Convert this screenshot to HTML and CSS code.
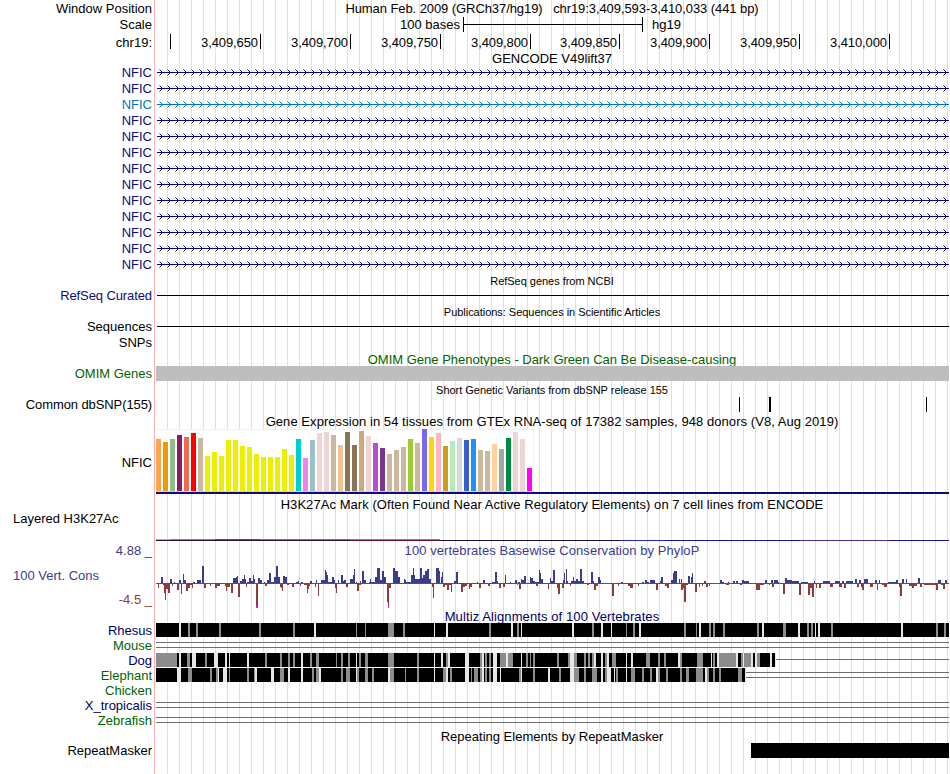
FILE: index.html
```html
<!DOCTYPE html>
<html lang="en">

<head>
    <meta charset="utf-8">
    <title>Genome Browser - hg19</title>
    <link rel="stylesheet" href="styles.css">
</head>

<body>
    <main class="browser">
        <div class="row row-head">
            <span class="label">Window Position</span>
            <div class="track title position">Human Feb. 2009 (GRCh37/hg19) &nbsp; chr19:3,409,593-3,410,033 (441 bp)</div>
        </div>
        <div class="row row-head row-up">
            <span class="label">Scale</span>
            <div class="track scale"><span class="scale-name">100 bases</span><span class="scale-bar"></span><span>hg19</span></div>
        </div>
        <div class="row row-head">
            <span class="label">chr19:</span>
            <div class="track ruler">
                <span class="pos pos-first"></span>
                <span class="pos">3,409,650</span>
                <span class="pos">3,409,700</span>
                <span class="pos">3,409,750</span>
                <span class="pos">3,409,800</span>
                <span class="pos pos-short">3,409,850</span>
                <span class="pos">3,409,900</span>
                <span class="pos">3,409,950</span>
                <span class="pos">3,410,000</span>
            </div>
        </div>

        <div class="row row-13"><div class="track title">GENCODE V49lift37</div></div>
        <div id="genes"></div>

        <div class="row row-refseq"><div class="track title small">RefSeq genes from NCBI</div></div>
        <div class="row row-up navy">
            <span class="label tight">RefSeq Curated</span>
            <div class="track"><div class="line"></div></div>
        </div>
        <div class="row row-15"><div class="track title small">Publications: Sequences in Scientific Articles</div></div>
        <div class="row row-up">
            <span class="label">Sequences</span>
            <div class="track"><div class="line"></div></div>
        </div>
        <div class="row row-up"><span class="label">SNPs</span></div>
        <div class="row row-15 green"><div class="track title">OMIM Gene Phenotypes - Dark Green Can Be Disease-causing</div></div>
        <div class="row row-up green">
            <span class="label">OMIM Genes</span>
            <div class="track"><div class="omim"></div></div>
        </div>
        <div class="row row-15"><div class="track title small">Short Genetic Variants from dbSNP release 155</div></div>
        <div class="row row-up">
            <span class="label tight">Common dbSNP(155)</span>
            <svg class="track" id="snps" viewBox="155 0 794 16"></svg>
        </div>

        <div class="row"><div class="track title loose">Gene Expression in 54 tissues from GTEx RNA-seq of 17382 samples, 948 donors (V8, Aug 2019)</div></div>
        <div class="row row-gtex">
            <span class="label">NFIC</span>
            <svg class="track" id="gtex" viewBox="155 429 794 67"></svg>
        </div>

        <div class="row"><div class="track title loose">H3K27Ac Mark (Often Found Near Active Regulatory Elements) on 7 cell lines from ENCODE</div></div>
        <div class="row row-h3k">
            <span class="label label-left">Layered H3K27Ac</span>
            <svg class="track" id="h3k" viewBox="155 512 794 31"></svg>
        </div>

        <div class="row row-cons blue">
            <div class="label cons-labels">
                <span>4.88 _</span>
                <span class="label-left">100 Vert. Cons</span>
                <span class="brown">-4.5 _</span>
            </div>
            <div class="track">
                <div class="title loose">100 vertebrates Basewise Conservation by PhyloP</div>
                <svg id="cons" viewBox="155 559 794 50"></svg>
            </div>
        </div>

        <div class="row row-14 dark"><div class="track title looser">Multiz Alignments of 100 Vertebrates</div></div>
        <div id="multiz"></div>

        <div class="row row-repeat"><div class="track title">Repeating Elements by RepeatMasker</div></div>
        <div class="row row-up">
            <span class="label">RepeatMasker</span>
            <div class="track"><div class="repeat"></div></div>
        </div>
    </main>
    <script src="tracks.js"></script>
</body>

</html>
```
FILE: styles.css
```css
:root {
    --navy: #0c0c78;
    --blue: #3c3c8c;
    --brown: #8c3c3c;
    --green: #006400;
}

body {
    margin: 0;
    background: #fff;
    color: #000;
    font-family: "Liberation Sans", Arial, sans-serif;
    font-size: 13px;
}

/* guide lines every 12px, pink border between labels and tracks */
.browser {
    width: 949px;
    height: 774px;
    overflow: hidden;
    background:
        linear-gradient(#ffb4b4, #ffb4b4) 154px 0 / 1px 100% no-repeat,
        repeating-linear-gradient(to right, #dcdcff 0 1px, transparent 1px 12px) 167px 0 / 782px 100% no-repeat;
}

.row {
    display: flex;
    height: 16px;
    line-height: 17px;
    white-space: nowrap;
}

.row-head { height: 17px; }
.row-up { line-height: 15px; }
.row-13 { height: 13px; line-height: 15px; }
.row-14 { height: 14px; line-height: 16px; }
.row-15 { height: 15px; line-height: 17px; }
.row-15 .label { line-height: 15px; }
.row-refseq { line-height: 19px; }
.row-gtex { height: 67px; line-height: 67px; }
.row-h3k { height: 31px; line-height: 14px; }
.row-cons { height: 66px; line-height: 16px; }
.row-repeat { height: 15px; line-height: 17px; }

.label {
    width: 152px;
    margin-right: 3px;
    text-align: right;
}

.label-left {
    padding-left: 13px;
    box-sizing: border-box;
    text-align: left;
}

.track {
    display: block;
    width: 794px;
    height: 100%;
    margin-left: auto;
}

.label + .track { margin-left: 0; }

.title { text-align: center; }
.small { font-size: 11px; letter-spacing: -0.03px; }

.position { letter-spacing: -0.08px; }
.tight { letter-spacing: -0.1px; }
.loose { letter-spacing: 0.06px; }
.looser { letter-spacing: 0.1px; }

.navy { color: var(--navy); }
.blue { color: var(--blue); }
.brown { color: var(--brown); }
.green { color: var(--green); }
.dark { color: #000064; }
.light-blue { color: #0c72b4; }

.scale {
    display: flex;
}

.scale-name {
    width: 305px;
    text-align: right;
}

.scale-bar {
    width: 178px;
    height: 15px;
    margin: 0 9px 0 3px;
    border: solid #000;
    border-width: 0 1px;
    background: linear-gradient(#000, #000) 0 7px / 100% 1px no-repeat;
}

.ruler {
    display: flex;
    letter-spacing: -0.1px;
}

.pos {
    width: 90px;
    height: 15px;
    box-sizing: border-box;
    padding-right: 2px;
    border-right: 1px solid #000;
    text-align: right;
}

.pos-first { width: 16px; }
.pos-short { width: 89px; }

.line {
    height: 1px;
    margin: 7px 0 0 2px;
    background: #000;
}

.omim {
    height: 15px;
    margin-left: 1px;
    background: #bebebe;
}

.repeat {
    width: 198px;
    height: 15px;
    margin-left: auto;
    background: #000;
}

.cons-labels {
    display: flex;
    flex-direction: column;
    justify-content: space-between;
    height: 65px;
}

#cons {
    display: block;
    width: 794px;
    height: 50px;
}
```
FILE: tracks.js
```js
const svgNS = 'http://www.w3.org/2000/svg';

function rect(svg, x, y, w, h, fill) {
    const r = document.createElementNS(svgNS, 'rect');
    Object.entries({ x, y, width: w, height: h, fill }).forEach(([k, v]) => r.setAttribute(k, v));
    svg.appendChild(r);
}

function addRow(parent, name, color, height) {
    const row = document.createElement('div');
    row.className = `row row-${height} ${color}`;
    row.innerHTML = `<span class="label">${name}</span><svg class="track" viewBox="155 0 794 ${height}"></svg>`;
    parent.appendChild(row);
    return row.querySelector('svg');
}

// transcripts, all on the + strand
for (let i = 0; i < 13; i++) {
    const color = i === 2 ? '#0c72b4' : '#0c0c78';
    const soft = i === 2 ? '#85b8d9' : '#8585bb';
    const svg = addRow(document.getElementById('genes'), 'NFIC', i === 2 ? 'light-blue' : 'navy', 16);
    rect(svg, 157, 8, 792, 1, color);
    for (let x = 159; x < 949; x += 8) {
        [0, 1, 2].forEach(d => {
            rect(svg, x + d, 5 + d, 1, 1, d ? color : soft);
            rect(svg, x + d, 11 - d, 1, 1, d ? color : soft);
        });
    }
}

const snps = document.getElementById('snps');
[[739, 1], [769, 2], [926, 1]].forEach(([x, w]) => rect(snps, x, 0, w, 15, '#000'));

// GTEx tissues: height and colour
const tissues = [
    [52, '#ffa54f'], [49, '#ee9a00'], [52, '#8fbc8f'], [56, '#8b1c62'], [54, '#ee6a50'], [58, '#ff0000'],
    [53, '#cdb79e'], [35, '#eeee00'], [39, '#eeee00'], [35, '#eeee00'], [51, '#eeee00'], [51, '#eeee00'],
    [45, '#eeee00'], [44, '#eeee00'], [37, '#eeee00'], [34, '#eeee00'], [34, '#eeee00'], [34, '#eeee00'],
    [42, '#eeee00'], [36, '#eeee00'], [52, '#00cdcd'], [33, '#ee82ee'], [51, '#9ac0cd'], [58, '#eed5d2'],
    [59, '#eed5d2'], [56, '#cdb79e'], [46, '#eec591'], [59, '#8b7355'], [46, '#8b7355'], [60, '#cdaa7d'],
    [55, '#eed5d2'], [48, '#b452cd'], [43, '#7a378b'], [37, '#cdb79e'], [41, '#cdb79e'], [44, '#cdb79e'],
    [52, '#9acd32'], [48, '#cdb79e'], [62, '#7a67ee'], [54, '#ffd700'], [58, '#ffb6c1'], [45, '#cd9b1d'],
    [50, '#b4eeb4'], [53, '#d9d9d9'], [51, '#3a5fcd'], [52, '#1e90ff'], [41, '#cdb79e'], [40, '#cdb79e'],
    [47, '#ffd39b'], [42, '#a6a6a6'], [53, '#008b45'], [59, '#eed5d2'], [52, '#eed5d2'], [23, '#ff00ff']
];
const gtex = document.getElementById('gtex');
rect(gtex, 156, 429, 378, 63, '#f2f2f2');
rect(gtex, 156, 430, 377, 61, '#fff');
rect(gtex, 156, 491, 378, 1, '#d2d2d2');
tissues.forEach(([h, color], i) => rect(gtex, 156 + i * 7, 491 - h, 5, h, color));
rect(gtex, 156, 492, 793, 2, '#0c0c78');

const h3k = document.getElementById('h3k');
[[156, 14, '#5fd9b4'], [170, 45, '#e650a0'], [215, 45, '#4646c8'], [260, 90, '#a050dc'], [350, 90, '#e650a0']]
    .forEach(([x, w, c]) => rect(h3k, x, 539, w, 1, c));
[[156, 194, '#320f32'], [350, 90, '#641428'], [440, 180, '#1e0a50'], [620, 45, '#1e28c8'], [665, 135, '#1414a0'],
    [800, 90, '#3c32a0'], [890, 59, '#1414a0']]
    .forEach(([x, w, c]) => rect(h3k, x, 540, w, 1, c));

// PhyloP scores: x, width, height
const up = `161,2,6 170,2,4 174,1,1 179,2,3 183,1,9 184,2,3 193,2,1 197,4,3 202,2,17 233,3,5 236,1,6 237,1,7 240,2,2
242,2,4 244,1,8 245,1,4 247,2,1 249,2,5 251,2,2 253,1,8 254,1,4 258,2,5 260,2,3 264,1,1 267,2,3 269,2,10 271,3,1
274,2,6 276,2,17 278,2,6 283,2,7 285,2,6 296,2,1 298,1,2 301,2,1 310,2,2 316,1,3 321,4,3 325,1,13 326,1,11 327,1,8
328,4,1 332,2,6 334,1,3 338,1,3 341,2,8 343,1,2 344,2,3 350,3,4 353,1,8 354,1,14 356,1,1 360,1,2 362,2,12 364,2,3
369,1,1 370,1,4 371,4,1 375,2,6 377,3,15 380,2,3 382,2,12 384,2,6 393,2,15 395,3,12 398,2,6 404,1,4 405,1,3 406,5,1
411,2,8 413,1,15 414,1,8 415,5,4 420,2,15 422,1,5 423,2,8 425,2,12 427,2,14 429,2,4 436,3,15 439,1,12 441,1,6 442,1,11
454,2,2 456,2,11 477,1,1 483,2,3 492,3,1 495,2,11 497,1,2 505,1,8 510,1,1 515,2,3 518,2,1 521,1,4 522,2,3 524,2,7
530,1,6 531,2,5 533,2,2 535,4,1 539,1,13 540,1,10 541,2,4 550,1,5 551,2,2 553,2,13 563,1,3 564,1,10 566,1,14 567,1,2
571,2,2 573,1,6 574,2,2 576,2,4 578,2,2 580,2,14 582,2,2 591,2,11 593,1,2 598,2,6 600,1,3 621,2,1 642,2,1 645,2,3
647,2,1 650,5,3 660,1,2 661,2,6 671,2,3 673,1,10 674,3,12 679,1,4 681,1,4 688,2,7 691,1,6 692,1,10 704,2,2 720,2,3
722,2,1 728,1,1 733,2,2 736,2,2 742,2,3 744,5,2 765,2,3 771,2,3 774,4,3 778,1,1 785,2,5 787,5,3 792,7,2 801,7,1
814,1,2 823,7,2 835,5,2 842,2,2 846,7,2 855,2,4 859,2,3 864,4,4 875,2,3 879,1,3 888,8,1 896,2,3 902,2,4 906,1,4
918,2,5 938,3,3 945,2,3`;
const down = `158,1,5 163,1,2 164,1,10 165,1,17 166,2,6 168,2,10 172,1,3 177,2,7 181,1,11 186,2,8 188,2,5 190,2,2 192,1,5
204,2,5 210,1,3 215,2,5 217,3,3 225,1,3 226,1,8 227,3,4 231,2,10 238,2,14 246,1,4 256,2,25 265,2,3 280,1,4 281,1,5
282,1,8 287,2,2 292,2,4 300,1,3 304,3,2 307,1,10 308,1,6 309,1,3 315,1,4 318,1,13 335,1,5 336,1,10 346,2,4 357,2,8
359,2,2 387,1,19 388,1,25 389,2,5 400,4,1 432,1,4 433,1,15 443,2,4 445,2,2 447,2,7 449,2,2 451,1,9 461,2,9 463,2,4
465,2,3 469,1,6 470,2,4 479,2,5 488,2,3 499,2,5 503,2,4 517,1,2 519,2,6 536,2,3 548,1,6 557,1,5 558,2,11 562,2,5
570,1,3 587,2,2 594,2,7 596,2,3 612,2,13 618,1,3 628,2,3 630,3,5 638,1,3 656,2,7 665,2,3 667,2,5 681,2,7 683,1,5
684,2,19 686,2,2 695,2,9 699,1,4 702,1,3 706,2,4 709,1,3 726,3,2 740,2,2 756,4,7 760,4,2 769,1,2 772,2,4 783,2,11
799,2,12 808,2,12 810,2,5 812,2,14 816,1,5 819,2,5 830,3,4 839,3,4 844,2,5 857,2,4 861,1,4 862,2,7 870,3,4 877,1,7
882,2,2 884,3,4 899,1,4 900,2,13 909,8,3 912,2,5 920,2,4 924,12,2 936,2,7 941,2,2 943,2,6`;
const cons = document.getElementById('cons');
const parse = s => s.split(/\s+/).map(t => t.split(',').map(Number));
rect(cons, 156, 583, 793, 1, '#8c3c3c');
parse(up).forEach(([x, w, h]) => rect(cons, x, 583 - h, w, h, '#3c3c8c'));
parse(down).forEach(([x, w, h]) => rect(cons, x, 583, w, h, '#8c3c3c'));
// clipped below the viewing range
rect(cons, 256, 606, 2, 2, '#ff00ff');
rect(cons, 388, 606, 1, 2, '#ff00ff');

// alignment blocks: g = weaker, w = weakest, as x,width
const species = [
    { name: 'Rhesus', color: 'dark', end: 949,
        g: '188,2 196,2 219,2 259,2 293,2 356,1 365,1 388,6 403,2 489,2 517,2 592,2 626,1 633,2 684,2 696,1 709,2 713,2 723,2 757,2 783,3 807,2 811,2 831,2 936,2 944,2',
        w: '179,2 314,2 434,1 446,2 511,2 521,1 572,2 601,2 611,1 639,2 699,2 762,2 798,2 815,1 818,2 901,2' },
    { name: 'Mouse', color: 'green', lines: [4, 9], from: 156 },
    { name: 'Dog', color: 'dark', end: 775, lines: [6], from: 776,
        g: '156,21 187,3 205,2 265,2 280,2 288,2 293,2 310,2 316,3 336,1 341,2 348,2 359,2 365,3 388,6 417,2 446,2 480,2 485,2 489,2 500,6 508,5 526,2 530,1 533,2 557,2 568,2 574,3 584,2 588,2 592,2 605,2 612,4 646,4 658,2 664,2 680,2 697,6 713,2 719,17 741,2 744,7 757,3',
        w: '179,2 192,4 214,4 225,2 229,1 247,2 301,2 356,1 434,1 441,2 448,2 465,4 482,2 493,4 506,2 521,1 570,4 594,2 601,2 607,2 626,1 631,2 678,2 711,1 717,2 736,2 743,1 751,2 755,2 770,2 775,1' },
    { name: 'Elephant', color: 'green', end: 745, lines: [4, 9], from: 746,
        g: '188,4 210,2 216,2 229,1 247,2 254,1 280,4 312,2 316,3 341,2 346,4 357,2 365,3 372,2 390,4 405,1 417,2 443,3 450,2 471,1 474,4 480,2 485,2 489,2 519,2 533,2 559,2 574,5 584,2 592,5 605,2 616,2 631,4 642,2 650,2 658,2 666,2 680,2 686,3 696,7 707,2 713,2 719,2 738,4',
        w: '177,4 218,1 223,4 255,2 271,3 288,2 301,2 319,2 356,1 388,2 434,1 446,2 465,4 482,2 493,4 500,1 521,1 548,2 570,4 601,2 607,4 614,1 626,1 656,2 705,2 745,1' },
    { name: 'Chicken', color: 'green' },
    { name: 'X_tropicalis', color: 'dark', lines: [4, 9], from: 156 },
    { name: 'Zebrafish', color: 'green', lines: [4, 9], from: 156 }
];
species.forEach(s => {
    const svg = addRow(document.getElementById('multiz'), s.name, s.color, 15);
    (s.lines || []).forEach(y => rect(svg, s.from, y, 949 - s.from, 1, '#6e6e6e'));
    if (s.end) {
        rect(svg, 156, 0, s.end - 156, 14, '#000');
        parse(s.g).forEach(([x, w]) => rect(svg, x, 0, w, 14, '#8c8c8c'));
        parse(s.w).forEach(([x, w]) => rect(svg, x, 0, w, 14, '#e6e6e6'));
    }
});
```
